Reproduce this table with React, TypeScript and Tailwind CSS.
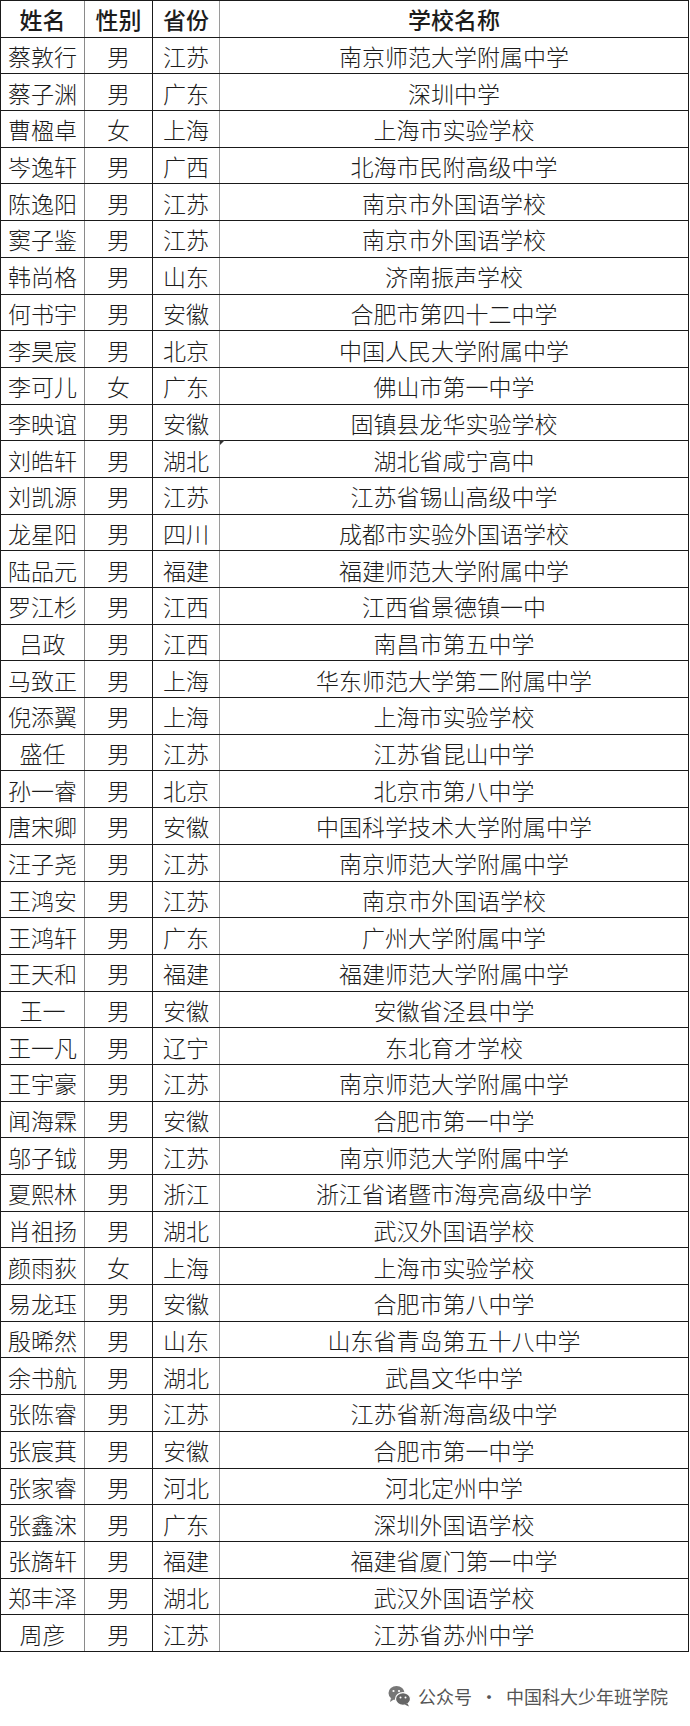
const rows: [string, string, string, string][] = [
  ['蔡敦行', '男', '江苏', '南京师范大学附属中学'],
  ['蔡子渊', '男', '广东', '深圳中学'],
  ['曹楹卓', '女', '上海', '上海市实验学校'],
  ['岑逸轩', '男', '广西', '北海市民附高级中学'],
  ['陈逸阳', '男', '江苏', '南京市外国语学校'],
  ['窦子鉴', '男', '江苏', '南京市外国语学校'],
  ['韩尚格', '男', '山东', '济南振声学校'],
  ['何书宇', '男', '安徽', '合肥市第四十二中学'],
  ['李昊宸', '男', '北京', '中国人民大学附属中学'],
  ['李可儿', '女', '广东', '佛山市第一中学'],
  ['李映谊', '男', '安徽', '固镇县龙华实验学校'],
  ['刘皓轩', '男', '湖北', '湖北省咸宁高中'],
  ['刘凯源', '男', '江苏', '江苏省锡山高级中学'],
  ['龙星阳', '男', '四川', '成都市实验外国语学校'],
  ['陆品元', '男', '福建', '福建师范大学附属中学'],
  ['罗江杉', '男', '江西', '江西省景德镇一中'],
  ['吕政', '男', '江西', '南昌市第五中学'],
  ['马致正', '男', '上海', '华东师范大学第二附属中学'],
  ['倪添翼', '男', '上海', '上海市实验学校'],
  ['盛任', '男', '江苏', '江苏省昆山中学'],
  ['孙一睿', '男', '北京', '北京市第八中学'],
  ['唐宋卿', '男', '安徽', '中国科学技术大学附属中学'],
  ['汪子尧', '男', '江苏', '南京师范大学附属中学'],
  ['王鸿安', '男', '江苏', '南京市外国语学校'],
  ['王鸿轩', '男', '广东', '广州大学附属中学'],
  ['王天和', '男', '福建', '福建师范大学附属中学'],
  ['王一', '男', '安徽', '安徽省泾县中学'],
  ['王一凡', '男', '辽宁', '东北育才学校'],
  ['王宇豪', '男', '江苏', '南京师范大学附属中学'],
  ['闻海霖', '男', '安徽', '合肥市第一中学'],
  ['邬子钺', '男', '江苏', '南京师范大学附属中学'],
  ['夏熙林', '男', '浙江', '浙江省诸暨市海亮高级中学'],
  ['肖祖扬', '男', '湖北', '武汉外国语学校'],
  ['颜雨荻', '女', '上海', '上海市实验学校'],
  ['易龙珏', '男', '安徽', '合肥市第八中学'],
  ['殷晞然', '男', '山东', '山东省青岛第五十八中学'],
  ['余书航', '男', '湖北', '武昌文华中学'],
  ['张陈睿', '男', '江苏', '江苏省新海高级中学'],
  ['张宸萁', '男', '安徽', '合肥市第一中学'],
  ['张家睿', '男', '河北', '河北定州中学'],
  ['张鑫浨', '男', '广东', '深圳外国语学校'],
  ['张旖轩', '男', '福建', '福建省厦门第一中学'],
  ['郑丰泽', '男', '湖北', '武汉外国语学校'],
  ['周彦', '男', '江苏', '江苏省苏州中学'],
];

function WeChatIcon() {
  return (
    <svg width="23" height="22" viewBox="0 0 23 22">
      <ellipse cx="8.5" cy="8" rx="8" ry="7" fill="#777" />
      <path d="M3 13 L2 17 L6.5 14 Z" fill="#777" />
      <ellipse cx="15" cy="14" rx="7.5" ry="6.3" fill="#666" stroke="#fff" strokeWidth="1.2" />
      <path d="M19.5 18.5 L21 21.5 L16.5 19.5 Z" fill="#666" />
      <circle cx="5.5" cy="6" r="1.1" fill="#fff" />
      <circle cx="11" cy="6" r="1.1" fill="#fff" />
      <circle cx="12.5" cy="12.5" r="1" fill="#fff" />
      <circle cx="17.5" cy="12.5" r="1" fill="#fff" />
    </svg>
  );
}

const cell = 'flex items-center justify-center pt-[2px] whitespace-nowrap';

export default function App() {
  return (
    <div
      className="w-[690px] h-[1726px] bg-white text-[#1c1c1c]"
      style={{ fontFamily: '"Noto Sans CJK SC", "Liberation Sans", sans-serif' }}
    >
      {/* Table */}
      <div className="w-[689px] border-t border-l border-r border-[#1a1a1a]">
        {/* Header */}
        <div className="grid grid-cols-[84px_68px_67px_1fr] h-[36.7px] border-b border-[#1a1a1a] text-[23px] font-medium leading-none">
          <div className={`${cell} border-r border-[#8a8a8a]`}>姓名</div>
          <div className={`${cell} border-r border-[#1a1a1a]`}>性别</div>
          <div className={`${cell} border-r border-[#9a9a9a]`}>省份</div>
          <div className={cell}>学校名称</div>
        </div>

        {rows.map((r, i) => (
          <div
            key={i}
            className="grid grid-cols-[84px_68px_67px_1fr] h-[36.7px] border-b border-[#1a1a1a] text-[23px] font-light leading-none"
          >
            <div className={`${cell} border-r border-[#8a8a8a]`}>{r[0]}</div>
            <div className={`${cell} border-r border-[#1a1a1a]`}>{r[1]}</div>
            <div className={`relative ${cell} border-r border-[#9a9a9a]`}>
              {r[2]}
              {i === 11 && (
                <span className="absolute right-[-6px] top-[-1px] w-0 h-0 border-l-[5px] border-l-[#333] border-b-[5px] border-b-transparent" />
              )}
            </div>
            <div className={cell}>{r[3]}</div>
          </div>
        ))}
      </div>

      {/* Footer */}
      <div className="mt-[32px] flex items-center justify-end gap-[7px] pr-[22px] h-[24px] text-[18px] text-[#555] leading-none">
        <WeChatIcon />
        <span>
          公众号<span className="mx-[8px]">·</span>中国科大少年班学院
        </span>
      </div>
    </div>
  );
}
